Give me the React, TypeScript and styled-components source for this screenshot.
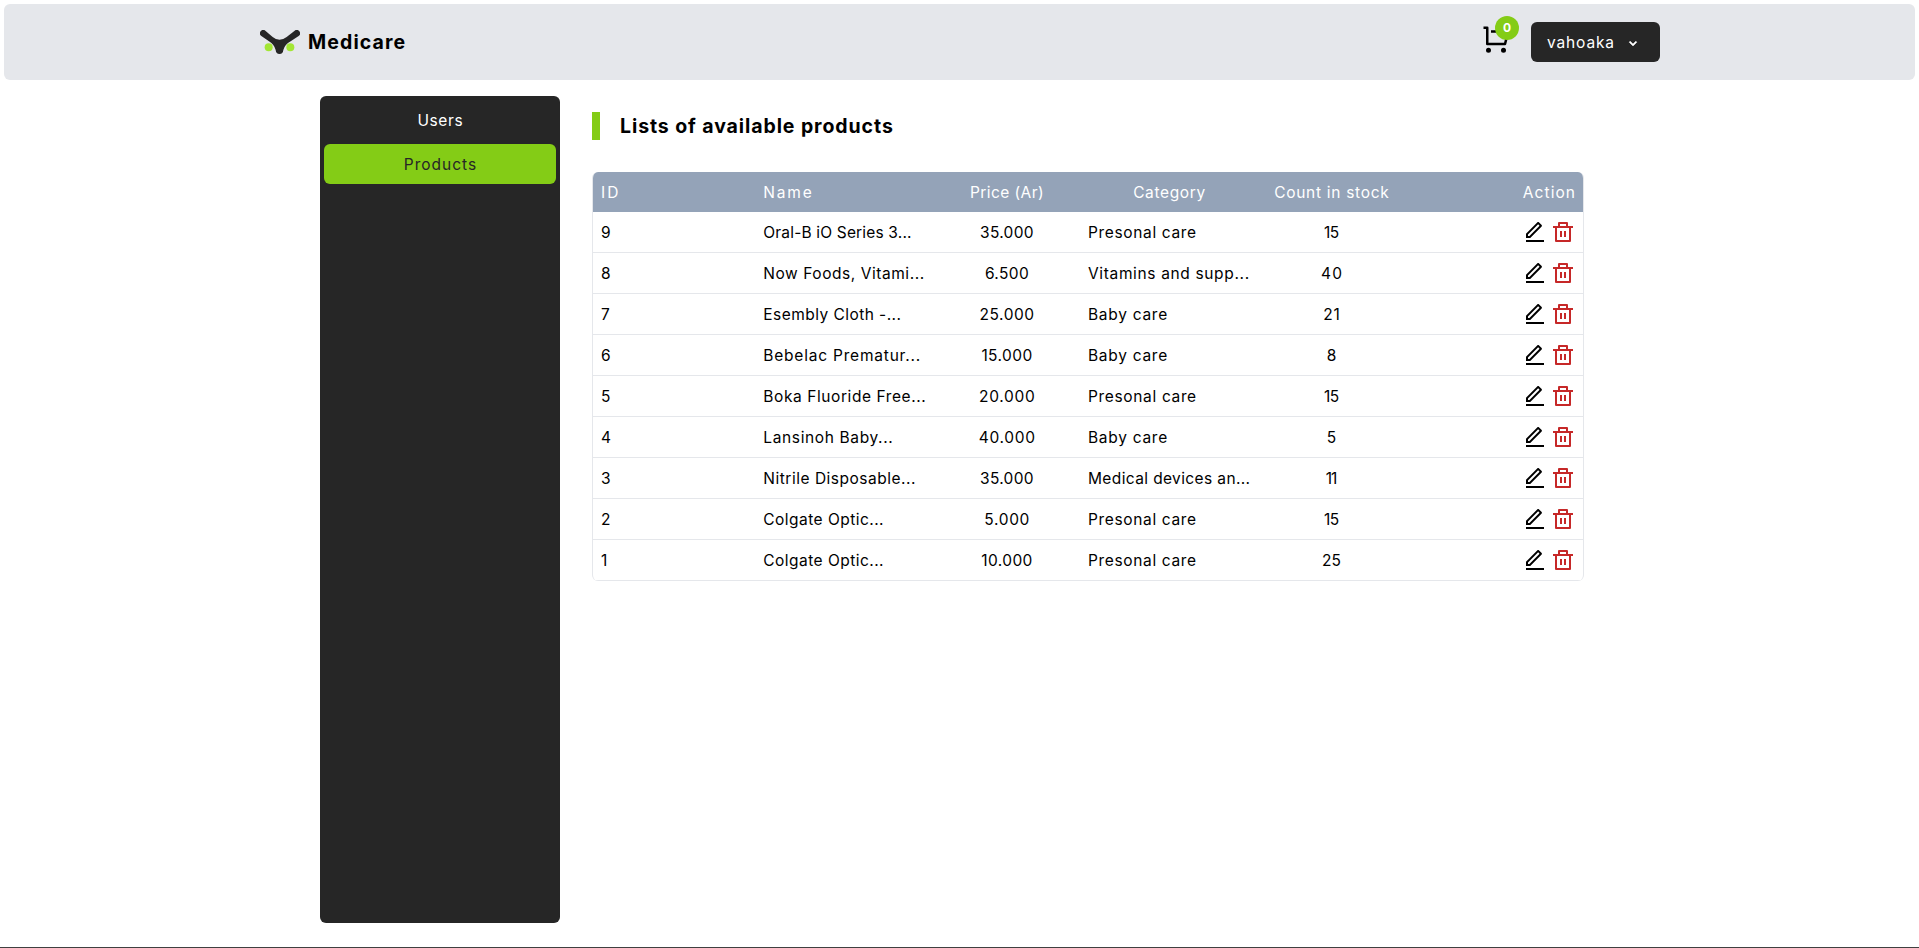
import React from 'react';
import styled, { createGlobalStyle } from 'styled-components';
import { BiChevronDown } from 'react-icons/bi';

const GlobalStyle = createGlobalStyle`
  *, *::before, *::after { box-sizing: border-box; }
  body {
    margin: 0;
    background: #fff;
    color: #000;
    font-family: Inter, "Open Sans", sans-serif;
    font-size: 15.5px;
    line-height: 24px;
  }
  button { font: inherit; border: 0; padding: 0; background: none; color: inherit; cursor: pointer; }
  svg { display: block; flex: none; }
`;

const Page = styled.div`
  display: flex;
  flex-direction: column;
  height: 948px;
  padding: 4px 4px 0;
  overflow: hidden;
`;

const TopBar = styled.header`
  display: flex;
  justify-content: center;
  height: 76px;
  flex: none;
  border-radius: 6px;
  background: #e5e7eb;
`;

const TopBarInner = styled.div`
  display: flex;
  align-items: center;
  justify-content: space-between;
  width: 1401px;
  padding-left: 1px;
`;

const Brand = styled.div`
  display: flex;
  align-items: center;
  gap: 8px;
  font-size: 19.5px;
  font-weight: 700;
  line-height: 28px;
`;

const Actions = styled.div`
  display: flex;
  align-items: center;
  gap: 20px;
`;

const CartButton = styled.button`
  position: relative;
  display: block;
  margin-top: -6px;
`;

const Badge = styled.span`
  position: absolute;
  top: -8px;
  right: -8px;
  display: flex;
  align-items: center;
  justify-content: center;
  width: 24px;
  height: 24px;
  border-radius: 50%;
  background: #84cc16;
  color: #fff;
  font-size: 12px;
  font-weight: 700;
  line-height: 16px;
`;

const UserButton = styled.button`
  display: flex;
  align-items: center;
  justify-content: space-between;
  width: 129px;
  height: 40px;
  padding: 1px 19px 0 16px;
  border-radius: 6px;
  background: #262626;
  color: #fff;
`;

const Body = styled.div`
  display: flex;
  gap: 32px;
  width: 1279px;
  height: 843px;
  margin: 0 auto;
  padding: 16px 15px 0 0;
`;

const Sidebar = styled.nav`
  display: flex;
  flex-direction: column;
  gap: 4px;
  width: 240px;
  height: 827px;
  flex: none;
  padding: 4px;
  border-radius: 6px;
  background: #262626;
`;

const NavItem = styled.a<{ $active?: boolean }>`
  display: flex;
  align-items: center;
  justify-content: center;
  height: 40px;
  padding-top: 2px;
  border-radius: 6px;
  background: ${(p) => (p.$active ? '#84cc16' : 'transparent')};
  color: ${(p) => (p.$active ? '#262626' : '#fff')};
`;

const Content = styled.main`
  flex: 1;
  min-width: 0;
  padding-top: 16px;
`;

const Title = styled.h1`
  margin: 0 0 32px;
  padding-left: 20px;
  border-left: 8px solid #84cc16;
  font-size: 19.5px;
  font-weight: 700;
  line-height: 28px;
`;

const Table = styled.div`
  border: solid #e5e7eb;
  border-width: 0 1px;
  border-radius: 6px;
  overflow: hidden;
`;

const Row = styled.div`
  display: grid;
  grid-template-columns: repeat(6, 1fr);
  align-items: center;
  padding: 8px;
  border-bottom: 1px solid #e5e7eb;
`;

const HeadRow = styled(Row)`
  border-bottom: 0;
  background: #94a3b8;
  color: #fff;
`;

const Cell = styled.div<{ $align?: 'center' | 'flex-end' }>`
  display: flex;
  justify-content: ${(p) => p.$align ?? 'flex-start'};
  gap: 4px;
  height: 24px;
  line-height: 26px;
  white-space: nowrap;
`;

const Label = styled.span<{ $track?: number }>`
  letter-spacing: ${(p) => p.$track ?? 0.6}px;
  margin-right: ${(p) => -(p.$track ?? 0.6)}px;
`;

const IconButton = styled.button<{ $color: string }>`
  color: ${(p) => p.$color};
`;

const Footer = styled.footer`
  flex: 1;
  margin: 24px -4px 0;
  background: #404040;
`;

const Logo = () => (
  <svg width="40" height="24" viewBox="60 90 120 72">
    <path
      fill="#262626"
      d="M76 92 L98 111 Q118 128 140 111 L164 92 A10 10 0 0 1 176 108 L152 124 Q134 134 130 150 Q129 162 118.500 162 Q108 162 107 150 Q103 134 87 124 L64 108 A10 10 0 0 1 76 92Z"
    />
    <circle cx="86" cy="141.500" r="12" fill="#a3e635" />
    <circle cx="151" cy="141.500" r="12" fill="#a3e635" />
  </svg>
);

const CartIcon = () => (
  <svg width="30" height="30" viewBox="0 0 24 24" fill="currentColor">
    <path d="M4 16V4H2V2h3a1 1 0 0 1 1 1v12h12.438l2-8H8V5h13.720a1 1 0 0 1 .970 1.243l-2.500 10a1 1 0 0 1-.970.757H5a1 1 0 0 1-1-1zm2 7a2 2 0 1 1 0-4 2 2 0 0 1 0 4zm12 0a2 2 0 1 1 0-4 2 2 0 0 1 0 4z" />
  </svg>
);

const EditIcon = () => (
  <svg width="24" height="24" viewBox="0 0 24 24" fill="currentColor">
    <path d="M6.41421 15.89L16.5563 5.74786L15.1421 4.33365L5 14.4758V15.89H6.41421ZM7.24264 17.89H3V13.6473L14.435 2.21233C14.8256 1.8218 15.4587 1.8218 15.8492 2.21233L18.6777 5.04075C19.0682 5.43128 19.0682 6.06444 18.6777 6.45497L7.24264 17.89ZM3 19.89H21V21.89H3V19.89Z" />
  </svg>
);

const DeleteIcon = () => (
  <svg width="24" height="24" viewBox="0 0 24 24" fill="currentColor">
    <path d="M17 6h5v2h-2v13a1 1 0 0 1-1 1H5a1 1 0 0 1-1-1V8H2V6h5V3a1 1 0 0 1 1-1h8a1 1 0 0 1 1 1v3zm1 2H6v12h12V8zm-9 3h2v6H9v-6zm4 0h2v6h-2v-6zM9 4v2h6V4H9z" />
  </svg>
);

type Text = [string, number?];

const products: { id: Text; name: Text; price: Text; category: Text; stock: Text }[] = [
  { id: ['9'], name: ['Oral-B iO Series 3...', 0.17], price: ['35.000', 0.3], category: ['Presonal care', 0.65], stock: ['15', -0.6] },
  { id: ['8'], name: ['Now Foods, Vitami...', 0.55], price: ['6.500', 0.37], category: ['Vitamins and supp...', 0.65], stock: ['40', 1.2] },
  { id: ['7'], name: ['Esembly Cloth -...', 0.45], price: ['25.000', 0.52], category: ['Baby care', 0.72], stock: ['21', 0.8] },
  { id: ['6'], name: ['Bebelac Prematur...', 0.79], price: ['15.000', 0.42], category: ['Baby care', 0.72], stock: ['8'] },
  { id: ['5'], name: ['Boka Fluoride Free...', 0.58], price: ['20.000', 0.71], category: ['Presonal care', 0.65], stock: ['15', -0.6] },
  { id: ['4'], name: ['Lansinoh Baby...', 0.63], price: ['40.000', 0.68], category: ['Baby care', 0.72], stock: ['5'] },
  { id: ['3'], name: ['Nitrile Disposable...', 0.51], price: ['35.000', 0.3], category: ['Medical devices an...', 0.38], stock: ['11', -1] },
  { id: ['2'], name: ['Colgate Optic...', 0.46], price: ['5.000', 0.67], category: ['Presonal care', 0.65], stock: ['15', -0.6] },
  { id: ['1'], name: ['Colgate Optic...', 0.46], price: ['10.000', 0.4], category: ['Presonal care', 0.65], stock: ['25', 0.25] },
];

const Tracked = ({ text: [value, track] }: { text: Text }) => <Label $track={track}>{value}</Label>;

export default function App() {
  return (
    <Page>
      <GlobalStyle />
      <TopBar>
        <TopBarInner>
          <Brand>
            <Logo />
            <Label $track={1.1}>Medicare</Label>
          </Brand>
          <Actions>
            <CartButton aria-label="Cart">
              <CartIcon />
              <Badge>0</Badge>
            </CartButton>
            <UserButton>
              <Label $track={0.86}>vahoaka</Label>
              <BiChevronDown size={16} strokeWidth={0.8} />
            </UserButton>
          </Actions>
        </TopBarInner>
      </TopBar>
      <Body>
        <Sidebar>
          <NavItem><Label $track={0.6}>Users</Label></NavItem>
          <NavItem $active><Label $track={1}>Products</Label></NavItem>
        </Sidebar>
        <Content>
          <Title><Label $track={0.91}>Lists of available products</Label></Title>
          <Table>
            <HeadRow>
              <Cell><Label $track={2}>ID</Label></Cell>
              <Cell><Label $track={1.8}>Name</Label></Cell>
              <Cell $align="center"><Label $track={0.43}>Price (Ar)</Label></Cell>
              <Cell $align="center"><Label $track={0.63}>Category</Label></Cell>
              <Cell $align="center"><Label $track={0.7}>Count in stock</Label></Cell>
              <Cell $align="flex-end"><Label $track={1.07}>Action</Label></Cell>
            </HeadRow>
            {products.map((p) => (
              <Row key={p.id[0]}>
                <Cell><Tracked text={p.id} /></Cell>
                <Cell><Tracked text={p.name} /></Cell>
                <Cell $align="center"><Tracked text={p.price} /></Cell>
                <Cell><Tracked text={p.category} /></Cell>
                <Cell $align="center"><Tracked text={p.stock} /></Cell>
                <Cell $align="flex-end">
                  <IconButton $color="#000" aria-label="Edit"><EditIcon /></IconButton>
                  <IconButton $color="#c62828" aria-label="Delete"><DeleteIcon /></IconButton>
                </Cell>
              </Row>
            ))}
          </Table>
        </Content>
      </Body>
      <Footer />
    </Page>
  );
}
